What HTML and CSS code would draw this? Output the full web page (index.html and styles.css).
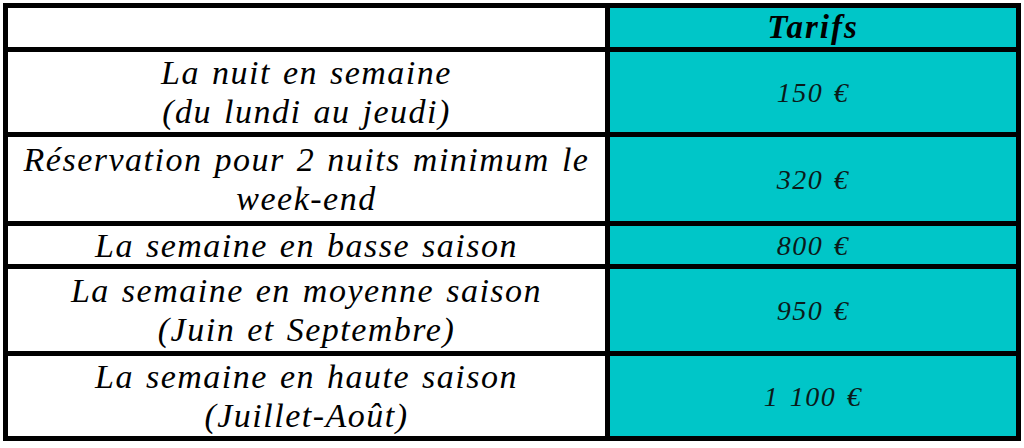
FILE: index.html
```html
<!DOCTYPE html>
<html lang="fr">
<head>
<meta charset="utf-8">
<title>Tarifs</title>
<link rel="stylesheet" href="styles.css">
</head>
<body>
<div class="tarifs">
  <div class="cell label r0"></div>
  <div class="cell price head r0">Tarifs</div>

  <div class="cell label r1">La nuit en semaine<br>(du lundi au jeudi)</div>
  <div class="cell price r1">150 €</div>

  <div class="cell label r2">Réservation pour 2 nuits minimum le<br>week-end</div>
  <div class="cell price r2">320 €</div>

  <div class="cell label r3">La semaine en basse saison</div>
  <div class="cell price r3">800 €</div>

  <div class="cell label r4">La semaine en moyenne saison<br>(Juin et Septembre)</div>
  <div class="cell price r4">950 €</div>

  <div class="cell label r5">La semaine en haute saison<br>(Juillet-Août)</div>
  <div class="cell price r5">1 100 €</div>
</div>
</body>
</html>
```
FILE: styles.css
```css
html, body {
  margin: 0;
  padding: 0;
  background: #ffffff;
}

body {
  padding: 3px;
}

.tarifs {
  display: grid;
  grid-template-columns: 597px 406px;
  grid-template-rows: 39px 80px 84px 38px 82px 80px;
  gap: 5px;
  padding: 5px;
  width: 1008px;
  background: #000000;
  font-family: "Liberation Serif", "DejaVu Serif", serif;
  font-style: italic;
  color: #000000;
}

.cell {
  display: flex;
  align-items: center;
  justify-content: center;
  text-align: center;
  font-size: 34px;
  line-height: 39px;
  letter-spacing: 1.5px;
  word-spacing: 2px;
  white-space: nowrap;
}

.label {
  background: #ffffff;
}

.price {
  background: #00c6c8;
  font-size: 28px;
  letter-spacing: 1.5px;
  color: #0a1a1a;
}

.head {
  font-size: 33px;
  font-weight: bold;
  letter-spacing: 2px;
  color: #000000;
}
```
